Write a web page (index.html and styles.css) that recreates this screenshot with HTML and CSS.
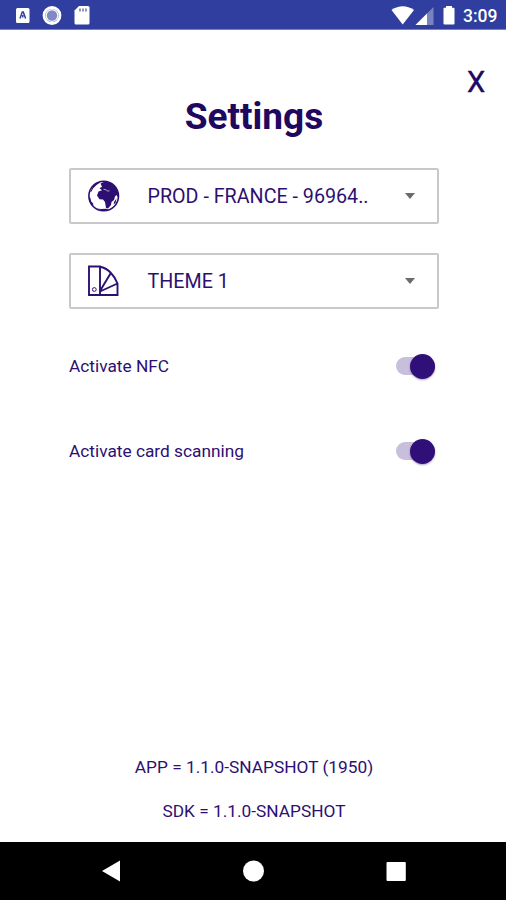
FILE: index.html
```html
<!DOCTYPE html>
<html lang="en">
<head>
<meta charset="utf-8">
<title>Settings</title>
<link rel="stylesheet" href="styles.css">
</head>
<body>
<div class="phone">
  <header class="status">
    <svg class="status-left" width="80" height="30" viewBox="0 0 80 30">
      <rect x="1" y="8" width="13.500" height="15" rx="1.500" fill="#fff"/>
      <path d="M5 18.500 7.300 12h1L10.600 18.500M7.800 15v2.500" fill="none" stroke="#303f9f" stroke-width="1.500"/>
      <circle cx="37" cy="15.500" r="8" fill="none" stroke="#fff" stroke-width="2.800"/>
      <circle cx="37" cy="15.500" r="6.500" fill="#fff"/>
      <circle cx="37" cy="15.500" r="5.200" fill="#8089c4"/>
      <path d="M64 6h9q1.500 0 1.500 1.500v15.500q0 1.500-1.500 1.500h-12q-1.500 0-1.500-1.500v-12.500z" fill="#fff"/>
      <path d="M65 8.500v3M68 8.500v3M71 8.500v3" stroke="#7570a7" stroke-width="1.500"/>
    </svg>
    <div class="status-right">
      <svg width="66" height="30" viewBox="0 0 66 30">
        <path d="M0.500 10Q11.700 2.500 23 10L11.700 24.500z" fill="#fff"/>
        <path d="M24.500 25 42.500 7v18z" fill="#7983c2"/>
        <path d="M24.500 25 36 13.500V25z" fill="#fff"/>
        <path d="M55 6h6v1.800h1.500q1 0 1 1V23.500q0 1-1 1h-9q-1 0-1-1V8.800q0-1 1-1H55z" fill="#fff"/>
      </svg>
      <span class="clock">3:09</span>
    </div>
  </header>
  <main class="content">
    <div class="close-row"><span class="close">X</span></div>
    <h1 class="title">Settings</h1>
    <div class="select">
      <svg class="icon" width="32" height="32" viewBox="0 0 32 32">
        <circle cx="15.700" cy="16" r="14.800" fill="#fff" stroke="#2d0f72" stroke-width="1.600"/>
        <path d="M12.500 3.500 17 1.300 23 2.800 28 7l2.500 6.500-.5 4-1.500-2.500-1.500 1.500-1 3.500-2.500 2-.5 3-3 3.500-2-.5-1-6-2-2.500-3.500-.3L9 15.500l1.500-4 3.500-1.200-2.500-2 2.500-1.500z" fill="#2d0f72"/>
        <path d="m5 6 4-3.500 3.500-1-1 1.500-3 2-3.500 3.500-1.500 3-1.500 1zM1.200 17l1 .5 1 4 2 2 0 2.500Q1 22 1.200 17zM9 28.500l4 .5 5-.2 2.500 1-5 1.200zM26 22l2.500-3.500-.8 4-2 2z" fill="#2d0f72"/>
        <path d="m15.500 9.300 2.500.5 1.500 1.200 2-.2" fill="none" stroke="#d6cee3" stroke-width=".8"/>
      </svg>
      <span class="value env">PROD - FRANCE - 96964..</span>
      <span class="arrow"></span>
    </div>
    <div class="select">
      <svg class="icon" width="32" height="32" viewBox="0 0 32 32" fill="none" stroke="#2d0f72" stroke-width="1.900">
        <path d="M1 1.500h11v28.500H1zM12 1.800Q18 3 22.500 7.500T29.500 18.500V30H12M12 26 22.800 8M12 26.500 29.500 18.500"/>
        <circle cx="6.300" cy="24.500" r="1.900" stroke-width="1"/>
      </svg>
      <span class="value theme">THEME 1</span>
      <span class="arrow"></span>
    </div>
    <div class="option"><span class="nfc">Activate NFC</span><span class="switch"><span class="thumb"></span></span></div>
    <div class="option"><span class="scan">Activate card scanning</span><span class="switch"><span class="thumb"></span></span></div>
    <footer class="versions">
      <p class="version">APP = 1.1.0-SNAPSHOT (1950)</p>
      <p class="version">SDK = 1.1.0-SNAPSHOT</p>
    </footer>
  </main>
  <nav class="navbar">
    <svg width="506" height="58" viewBox="0 0 506 58" fill="#fff">
      <path d="M102 29 120 18.500v21z"/>
      <circle cx="253.500" cy="29" r="10.500"/>
      <rect x="386.500" y="20" width="19.300" height="19" rx="1"/>
    </svg>
  </nav>
</div>
</body>
</html>
```
FILE: styles.css
```css
* { box-sizing: border-box; }
body {
  margin: 0;
  background: #fff;
  color: #2d0f72;
  font-family: Roboto, "Liberation Sans", sans-serif;
}
.phone { width: 506px; height: 900px; display: flex; flex-direction: column; overflow: hidden; }
.status {
  height: 30px;
  flex: none;
  display: flex;
  justify-content: space-between;
  padding: 0 9px 0 15px;
  background: #303f9f;
  border-bottom: 1px solid #7b83bd;
}
.status svg { display: block; flex: none; }
.status-right { display: flex; }
.clock { width: 34px; margin-left: 6px; font-size: 17.5px; font-weight: 500; line-height: 32px; color: #fff; white-space: nowrap; }
.content { flex: 1; min-height: 0; display: flex; flex-direction: column; padding: 0 67px 0 69px; }
.close-row { display: flex; justify-content: flex-end; height: 66px; padding-top: 35px; margin-right: -47px; }
.close { width: 20px; text-align: center; font-size: 29px; font-weight: 400; line-height: 34px; color: #200760; -webkit-text-stroke: .4px #200760; }
.title { margin: 0; height: 42px; text-align: center; font-size: 37px; line-height: 42px; font-weight: 700; color: #200760; }
.select {
  display: flex;
  align-items: center;
  height: 56px;
  flex: none;
  margin-top: 30px;
  padding: 0 22px 0 17px;
  border: 2px solid #c9c9c9;
  border-radius: 2px;
}
.select + .select { margin-top: 29px; }
.icon { flex: none; }
.value { flex: 1; margin-left: 27.5px; padding-top: 2px; font-size: 19.7px; line-height: 24px; white-space: nowrap; }
.arrow { border: 5.5px solid transparent; border-top: 6px solid #6b6b6b; border-bottom: 0; }
.option { display: flex; align-items: center; justify-content: space-between; height: 30px; margin: 42px 4px 0 0; font-size: 17.3px; }
.option + .option { margin-top: 55px; }
.switch { width: 39px; height: 18px; display: flex; justify-content: flex-end; align-items: center; border-radius: 9px; background: #c8bfdc; }
.thumb { width: 25px; height: 25px; border-radius: 50%; background: #310f79; box-shadow: 0 1px 2px rgba(45, 15, 114, .4); }
.versions { margin-top: auto; padding-bottom: 19px; text-align: center; }
.version { margin: 0; height: 24px; line-height: 24px; font-size: 17.3px; }
.version + .version { margin-top: 20px; }
.navbar { height: 58px; flex: none; background: #000; }
.navbar svg { display: block; }
```
